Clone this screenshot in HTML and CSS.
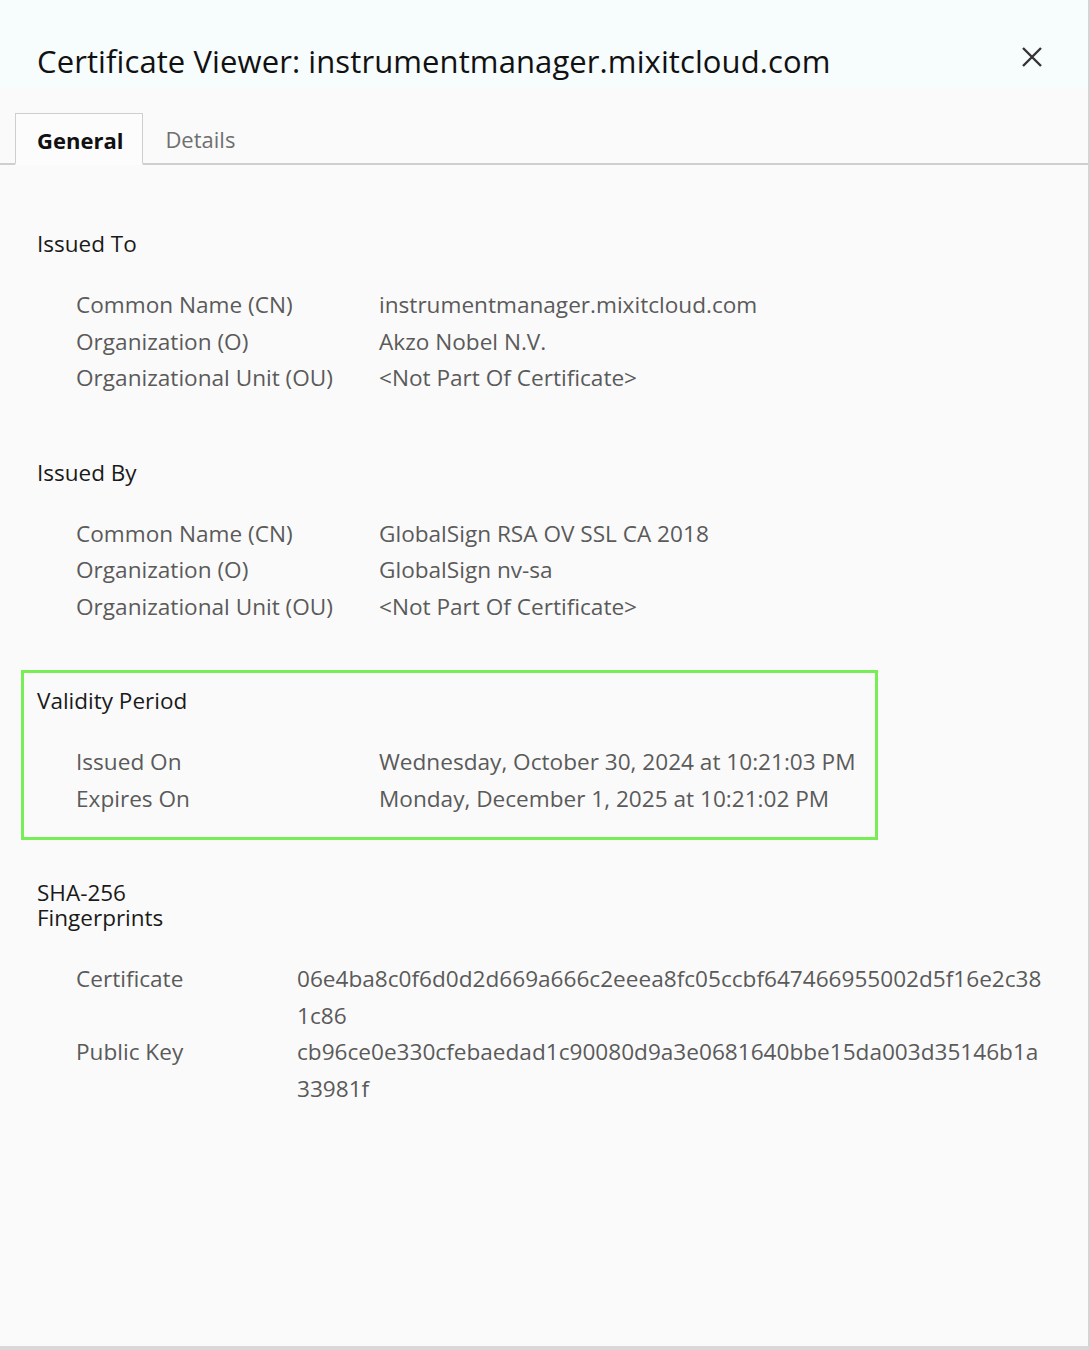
FILE: index.html
```html
<!DOCTYPE html>
<html>
<head>
  <title>Certificate Viewer</title>
  <meta charset="UTF-8">
  <link rel="stylesheet" href="styles.css">
</head>
<body>
  <div class="dialog">
    <div class="header">
      <h1>Certificate Viewer: instrumentmanager.mixitcloud.com</h1>
      <button class="close-btn" aria-label="Close">
        <svg width="22" height="22" viewBox="0 0 22 22">
          <path d="M2 2 L20 20 M20 2 L2 20" stroke="#333" stroke-width="2.4" fill="none"/>
        </svg>
      </button>
    </div>

    <div class="tabs">
      <div class="tab active">General</div>
      <div class="tab">Details</div>
    </div>

    <div class="content">
      <!-- Issued To -->
      <div class="section">
        <h2>Issued To</h2>
        <div class="rows">
          <div class="label">Common Name (CN)</div>
          <div class="value">instrumentmanager.mixitcloud.com</div>
          <div class="label">Organization (O)</div>
          <div class="value">Akzo Nobel N.V.</div>
          <div class="label">Organizational Unit (OU)</div>
          <div class="value">&lt;Not Part Of Certificate&gt;</div>
        </div>
      </div>

      <!-- Issued By -->
      <div class="section">
        <h2>Issued By</h2>
        <div class="rows">
          <div class="label">Common Name (CN)</div>
          <div class="value">GlobalSign RSA OV SSL CA 2018</div>
          <div class="label">Organization (O)</div>
          <div class="value">GlobalSign nv-sa</div>
          <div class="label">Organizational Unit (OU)</div>
          <div class="value">&lt;Not Part Of Certificate&gt;</div>
        </div>
      </div>

      <!-- Validity -->
      <div class="section highlighted">
        <h2>Validity Period</h2>
        <div class="rows">
          <div class="label">Issued On</div>
          <div class="value">Wednesday, October 30, 2024 at 10:21:03 PM</div>
          <div class="label">Expires On</div>
          <div class="value">Monday, December 1, 2025 at 10:21:02 PM</div>
        </div>
      </div>

      <!-- Fingerprints -->
      <div class="section">
        <h2 class="narrow">SHA-256 Fingerprints</h2>
        <div class="rows fingerprints">
          <div class="label">Certificate</div>
          <div class="value hash">06e4ba8c0f6d0d2d669a666c2eeea8fc05ccbf647466955002d5f16e2c38<wbr>1c86</div>
          <div class="label">Public Key</div>
          <div class="value hash">cb96ce0e330cfebaedad1c90080d9a3e0681640bbe15da003d35146b1a<wbr>33981f</div>
        </div>
      </div>
    </div>
  </div>
</body>
</html>
```

FILE: styles.css
```css
body {
  margin: 0;
  background-color: #fafafa;
  font-family: "Open Sans", "Noto Sans", sans-serif;
}
.dialog {
  width: 1088px;
  height: 1346px;
  border-right: 2px solid #d4d4d4;
  border-bottom: 4px solid #d8d8d8;
  background-color: #fafafa;
}
.header {
  display: flex;
  justify-content: space-between;
  align-items: center;
  height: 88px;
  padding: 34px 45px 0 37px;
  background-color: #f7fcfd;
  box-sizing: border-box;
}
.header h1 {
  margin: 0;
  font-size: 31px;
  font-weight: 400;
  line-height: 42px;
  color: #111;
  letter-spacing: 0.1px;
}
.close-btn {
  border: none;
  background: none;
  padding: 0;
  margin-bottom: 6px;
  cursor: pointer;
}
.tabs {
  display: flex;
  margin-top: 25px;
  padding-left: 15px;
  border-bottom: 2px solid #cfcfcf;
  height: 50px;
}
.tab {
  padding: 0 22px;
  line-height: 52px;
  font-size: 22px;
  color: #6f6f6f;
}
.tab.active {
  font-weight: 700;
  color: #111;
  background-color: #fcfcfc;
  border: 1px solid #cfcfcf;
  border-bottom: 2px solid #fcfcfc;
  margin-bottom: -2px;
  padding-left: 21px;
  padding-right: 19px;
}
.content {
  padding: 66px 0 0 37px;
}
.section {
  margin-bottom: 63px;
}
.section h2 {
  margin: 0 0 31px;
  font-size: 22.5px;
  font-weight: 400;
  line-height: 25px;
  color: #1a1a1a;
}
.section h2.narrow {
  width: 150px;
}
.rows {
  display: grid;
  grid-template-columns: 303px 1fr;
  padding-left: 39px;
  line-height: 36.5px;
  font-size: 22.6px;
  color: #5a5a5a;
}
.rows.fingerprints {
  grid-template-columns: 221px 756px;
}
.section.highlighted {
  width: 838px;
  margin-left: -16px;
  padding: 15px 0 20px 13px;
  border: 3px solid #77ee55;
  margin-top: -18px;
  margin-bottom: 40px;
}
```
